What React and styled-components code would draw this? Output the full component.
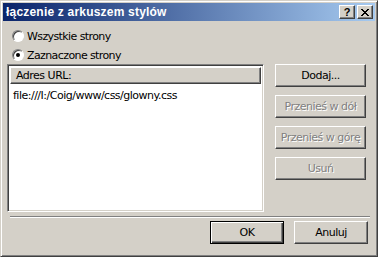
import React from 'react';
import styled, { createGlobalStyle } from 'styled-components';

const Global = createGlobalStyle`
  html, body { margin: 0; padding: 0; background: #D4D0C8; }
  body { font-family: Tahoma, "DejaVu Sans", "Liberation Sans", sans-serif; font-size: 11px; color: #000; }
`

const Window = styled.div`
  width: 378px;
  height: 257px;
  box-sizing: border-box;
  background: #D4D0C8;
  border: 1px solid;
  border-color: #D4D0C8 #404040 #404040 #D4D0C8;
  box-shadow: inset 1px 1px 0 #fff, inset -1px -1px 0 #808080;
  padding: 2px;
  display: flex;
  flex-direction: column;
`

const TitleBar = styled.div`
  height: 18px;
  background: linear-gradient(to right, #0A246A, #A6CAF0);
  display: flex;
  align-items: center;
  justify-content: space-between;
  padding: 0 2px 0 3px;
`

const Title = styled.span`
  color: #fff;
  font-weight: bold;
  font-family: "Liberation Sans", Arial, sans-serif;
  font-size: 12px;
  letter-spacing: 0.2px;
`

const Caps = styled.div`
  display: flex;
  gap: 2px;
`

const CapButton = styled.div`
  width: 16px;
  height: 14px;
  box-sizing: border-box;
  background: #D4D0C8;
  border: 1px solid;
  border-color: #fff #404040 #404040 #fff;
  box-shadow: inset -1px -1px 0 #808080;
  display: flex;
  align-items: center;
  justify-content: center;
  font-weight: bold;
  font-family: "Liberation Sans", sans-serif;
  font-size: 11px;
  line-height: 1;
`

const Body = styled.div`
  flex: 1;
  display: flex;
  flex-direction: column;
  padding: 6px 5px 5px 4px;
`

const RadioRow = styled.label`
  display: flex;
  align-items: center;
  height: 18px;
  padding-left: 5px;
  gap: 3px;
  font-family: "DejaVu Sans", sans-serif;
  font-size: 11px;
  letter-spacing: -0.6px;
  & + & { margin-top: 1px; }
`

const RadioDot = styled.span`
  width: 12px;
  height: 12px;
  box-sizing: border-box;
  border-radius: 50%;
  background: #fff;
  border: 1px solid;
  border-color: #808080 #fff #fff #808080;
  box-shadow: inset 1px 1px 0 #404040;
  display: flex;
  align-items: center;
  justify-content: center;
  &::after {
    content: '';
    width: 4px;
    height: 4px;
    border-radius: 50%;
    background: ${p => (p.$on ? '#000' : 'transparent')};
  }
`

const Main = styled.div`
  display: flex;
  gap: 11px;
`

const ListBox = styled.div`
  width: 257px;
  height: 148px;
  box-sizing: border-box;
  background: #fff;
  border: 1px solid;
  border-color: #808080 #fff #fff #808080;
  box-shadow: inset 1px 1px 0 #404040, inset -1px -1px 0 #D4D0C8;
  padding: 2px;
`

const Header = styled.div`
  height: 17px;
  box-sizing: border-box;
  background: #D4D0C8;
  border: 1px solid;
  border-color: #fff #404040 #404040 #fff;
  box-shadow: inset -1px -1px 0 #808080;
  padding-left: 5px;
  display: flex;
  align-items: center;
  font-family: "DejaVu Sans", sans-serif;
  letter-spacing: -0.5px;
`

const Row = styled.div`
  padding: 5px 0 0 3px;
  font-family: "DejaVu Sans", sans-serif;
  letter-spacing: -0.5px;
`

const Side = styled.div`
  display: flex;
  flex-direction: column;
  gap: 8px;
`

const Button = styled.button`
  width: ${p => p.$w || 91}px;
  height: 23px;
  box-sizing: border-box;
  background: #D4D0C8;
  font-family: "DejaVu Sans", sans-serif;
  font-size: 11px;
  letter-spacing: -0.5px;
  padding: 0;
  color: ${p => (p.disabled ? '#808080' : '#000')};
  text-shadow: ${p => (p.disabled ? '1px 1px 0 #fff' : 'none')};
  border: 1px solid;
  border-color: ${p => (p.$def ? '#000' : '#fff #404040 #404040 #fff')};
  box-shadow: ${p =>
    p.$def
      ? 'inset 1px 1px 0 #fff, inset -1px -1px 0 #404040, inset -2px -2px 0 #808080'
      : 'inset -1px -1px 0 #808080'};
`

const Separator = styled.div`
  height: 0;
  border-top: 1px solid #808080;
  border-bottom: 1px solid #fff;
  margin: 4px 0 3px 3px;
`

const Footer = styled.div`
  display: flex;
  justify-content: flex-end;
  gap: 10px;
  padding-right: 2px;
`

export default function App() {
  return (
    <>
      <Global />
      <Window>
        <TitleBar>
          <Title>łączenie z arkuszem stylów</Title>
          <Caps>
            <CapButton>?</CapButton>
            <CapButton>
              <svg width="8" height="7" viewBox="0 0 8 7">
                <path d="M0 0 L7 7 M1 0 L8 7 M7 0 L0 7 M8 0 L1 7" stroke="#000" strokeWidth="1" />
              </svg>
            </CapButton>
          </Caps>
        </TitleBar>
        <Body>
          <RadioRow><RadioDot />Wszystkie strony</RadioRow>
          <RadioRow><RadioDot $on />Zaznaczone strony</RadioRow>
          <Main>
            <ListBox>
              <Header>Adres URL:</Header>
              <Row>file:///I:/Coig/www/css/glowny.css</Row>
            </ListBox>
            <Side>
              <Button>Dodaj...</Button>
              <Button disabled>Przenieś w dół</Button>
              <Button disabled>Przenieś w górę</Button>
              <Button disabled>Usuń</Button>
            </Side>
          </Main>
          <Separator />
          <Footer>
            <Button $w={74} $def>OK</Button>
            <Button $w={74}>Anuluj</Button>
          </Footer>
        </Body>
      </Window>
    </>
  );
}
